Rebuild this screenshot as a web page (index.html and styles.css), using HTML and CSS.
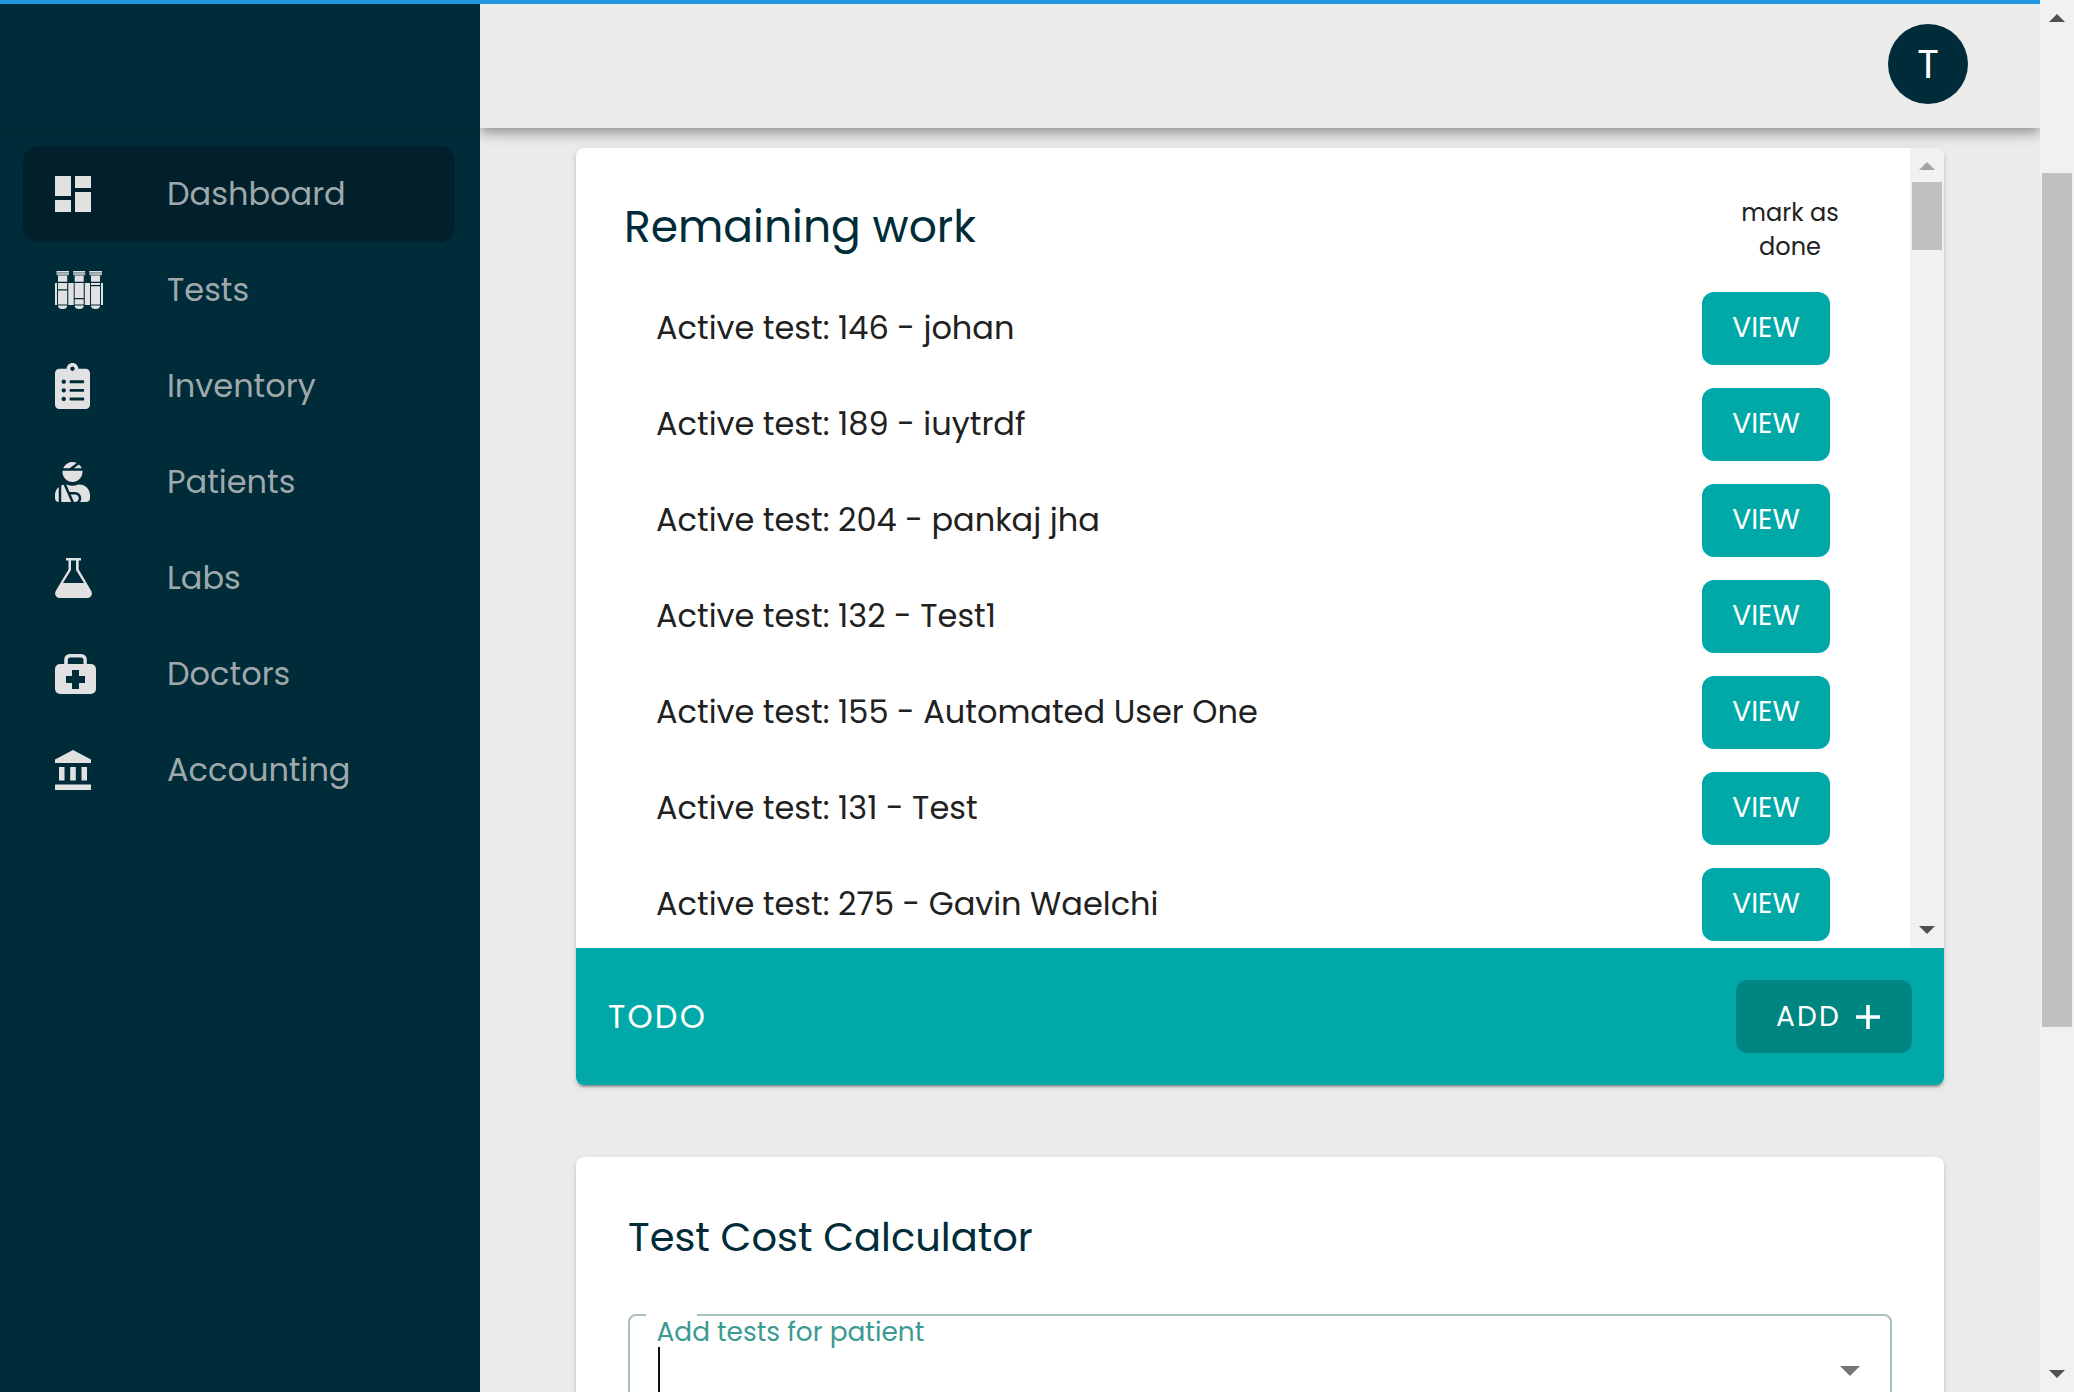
FILE: index.html
```html
<!DOCTYPE html>
<html lang="en">
<head>
<meta charset="utf-8">
<title>Dashboard</title>
<link rel="stylesheet" href="styles.css">
</head>
<body>
<div class="app">
  <nav class="sidebar">
    <div class="brand"></div>
    <ul class="menu">
      <li class="item active"><svg class="icon" width="36" height="36" viewBox="0 0 36 36"><path d="M0 0h16v20H0zM20 0h16v12H20zM0 24h16v12H0zM20 16h16v20H20z"/></svg><span>Dashboard</span></li>
      <li class="item"><svg class="icon" width="48" height="38" viewBox="0 0 48 38"><path d="M0 12h2v22H0zM13.300 12h5.400v22h-5.400zM29.800 12h5.200v22h-5.200zM46 12h2v22h-2z"/><path d="M1.500 0h12.500v1.200H1.500zM18.200 0h12v1.200h-12zM34.300 0H47v1.200H34.300z"/><path class="shade" d="M1.500 1.200h12.500v3H1.500zM18.200 1.200h12v3h-12zM34.300 1.200H47v3H34.300z"/><path d="M3 4.500h9.200v6.200H3zM19.700 4.500h9v6.200h-9zM36 4.500h9v6.200h-9zM3 12h9.200v6.200H3zM3 19.600h9.200v13.900H3zM19.700 12h9v15h-9zM19.700 28.200h9v5.300h-9zM36 12h9v2h-9zM36 15.200h9v18.300h-9z"/><path d="M3 34.500h9.200a4.600 3.500 0 0 1-9.200 0zM19.700 34.500h9a4.500 3.500 0 0 1-9 0zM36 34.500h9a4.500 3.500 0 0 1-9 0z"/></svg><span>Tests</span></li>
      <li class="item"><svg class="icon" width="35" height="46" viewBox="0 0 384 512" preserveAspectRatio="none"><path d="M336 64h-80c0-35.300-28.700-64-64-64s-64 28.700-64 64H48C21.500 64 0 85.500 0 112v352c0 26.500 21.500 48 48 48h288c26.500 0 48-21.500 48-48V112c0-26.500-21.500-48-48-48zM96 424c-13.300 0-24-10.700-24-24s10.700-24 24-24 24 10.700 24 24-10.700 24-24 24zm0-96c-13.300 0-24-10.700-24-24s10.700-24 24-24 24 10.700 24 24-10.700 24-24 24zm0-96c-13.300 0-24-10.700-24-24s10.700-24 24-24 24 10.700 24 24-10.700 24-24 24zm96-192c13.300 0 24 10.700 24 24s-10.700 24-24 24-24-10.700-24-24 10.700-24 24-24zm128 368c0 4.400-3.600 8-8 8H168c-4.400 0-8-3.600-8-8v-16c0-4.400 3.600-8 8-8h144c4.400 0 8 3.600 8 8v16zm0-96c0 4.400-3.600 8-8 8H168c-4.400 0-8-3.600-8-8v-16c0-4.400 3.600-8 8-8h144c4.400 0 8 3.600 8 8v16zm0-96c0 4.400-3.600 8-8 8H168c-4.400 0-8-3.600-8-8v-16c0-4.400 3.600-8 8-8h144c4.400 0 8 3.600 8 8v16z"/></svg><span>Inventory</span></li>
      <li class="item"><svg class="icon" width="35" height="40" viewBox="0 0 448 512"><path d="M277.370 11.980C261.080 4.470 243.110 0 224 0c-53.690 0-99.500 33.130-118.510 80h81.190l90.690-68.020zM342.510 80c-7.900-19.470-20.670-36.200-36.490-49.520L239.990 80h102.520zM224 256c70.690 0 128-57.310 128-128 0-5.480-.95-10.700-1.610-16H97.610c-.67 5.300-1.610 10.520-1.610 16 0 70.690 57.310 128 128 128zM80 299.700V512h128.260l-98.450-221.520A132.835 132.835 0 0 0 80 299.700zM0 464c0 26.510 21.490 48 48 48V320.240C18.880 344.890 0 381.260 0 422.400V464zm256-48h-55.380l42.670 96H256c26.470 0 48-21.530 48-48s-21.530-48-48-48zm57.600-128h-16.710c-22.240 10.180-46.880 16-72.890 16s-50.650-5.820-72.890-16h-7.370l42.670 96H256c44.110 0 80 35.890 80 80 0 18.080-6.260 34.590-16.410 48H400c26.510 0 48-21.490 48-48v-41.600c0-74.230-60.170-134.400-134.400-134.400z"/></svg><span>Patients</span></li>
      <li class="item"><svg class="icon" width="37" height="40" viewBox="0 0 37 40"><path fill-rule="evenodd" d="M11 0h15v2.500h-2.300v9L36 32.500c2.300 4-.2 7.500-4 7.500H5c-3.800 0-6.300-3.500-4-7.500L13.500 11.500v-9H11zM16 2.500V12L8 25h21l-8-13V2.500z"/></svg><span>Labs</span></li>
      <li class="item"><svg class="icon" width="41" height="40" viewBox="0 0 41 40"><path fill-rule="evenodd" d="M9.200 10V5.500A5.500 5.500 0 0 1 14.700 0h11.600a5.500 5.500 0 0 1 5.500 5.500V10H36a5 5 0 0 1 5 5v20a5 5 0 0 1-5 5H5a5 5 0 0 1-5-5V15a5 5 0 0 1 5-5zM12.800 10h15.700V6a2.500 2.500 0 0 0-2.500-2.500H15.300A2.500 2.500 0 0 0 12.800 6zM17 16v6h-6v7h6v6h7v-6h6v-7h-6v-6z"/></svg><span>Doctors</span></li>
      <li class="item"><svg class="icon" width="36" height="40" viewBox="0 0 36 40"><path d="M0 13V9.500L18 0l18 9.500V13zM4 17h5.500v13.500H4zM15.200 17h5.600v13.500h-5.600zM26.500 17H32v13.500h-5.500zM0 34.500h36V40H0z"/></svg><span>Accounting</span></li>
    </ul>
  </nav>
  <div class="page">
    <header class="topbar"><div class="avatar">T</div></header>
    <main class="content">
      <section class="card work">
        <div class="scroller">
          <div class="list">
            <div class="list-head"><h1>Remaining work</h1><p class="mark">mark as<br>done</p></div>
            <div class="row"><span>Active test: 146 - johan</span><button class="view">VIEW</button></div>
            <div class="row"><span>Active test: 189 - iuytrdf</span><button class="view">VIEW</button></div>
            <div class="row"><span>Active test: 204 - pankaj jha</span><button class="view">VIEW</button></div>
            <div class="row"><span>Active test: 132 - Test1</span><button class="view">VIEW</button></div>
            <div class="row"><span>Active test: 155 - Automated User One</span><button class="view">VIEW</button></div>
            <div class="row"><span>Active test: 131 - Test</span><button class="view">VIEW</button></div>
            <div class="row"><span>Active test: 275 - Gavin Waelchi</span><button class="view">VIEW</button></div>
          </div>
          <div class="bar inner"><i class="up-arrow muted"></i><i class="thumb"></i><i class="down-arrow"></i></div>
        </div>
        <footer class="todo"><span>TODO</span><button class="add"><span>ADD</span><svg width="24" height="24" viewBox="0 0 24 24"><path d="M10.200 0h3.600v10.200H24v3.600H13.800V24h-3.600V13.800H0v-3.600h10.200z"/></svg></button></footer>
      </section>
      <section class="card calc">
        <h2>Test Cost Calculator</h2>
        <div class="field"><label>Add tests for patient</label><i class="caret"></i><i class="drop"></i></div>
      </section>
    </main>
  </div>
  <div class="bar outer"><i class="up-arrow"></i><i class="thumb"></i><i class="down-arrow"></i></div>
  <div class="progress"></div>
</div>
</body>
</html>
```
FILE: styles.css
```css
* { box-sizing: border-box; }
body { margin: 0; font-family: Poppins, "Open Sans", sans-serif; font-weight: 400; color: #212121; background: #ebebeb; overflow: hidden; }
h1, h2, p, ul { margin: 0; padding: 0; font-weight: 400; }
button { border: 0; padding: 0; font: inherit; color: #fff; }
.app { position: relative; display: flex; height: 1392px; overflow: hidden; }
.progress { position: absolute; z-index: 3; left: 0; top: 0; width: 2040px; height: 4px; background: #2196e0; }

.sidebar { position: relative; z-index: 2; width: 480px; background: #002b38; }
.brand { height: 129px; border-bottom: 1px solid #02242f; }
.menu { list-style: none; padding: 17px 25px 0 23px; }
.item { display: grid; grid-template-columns: 112px 1fr; align-items: center; height: 96px; padding-left: 32px; border-radius: 16px; font-size: 32px; color: #9fa9ac; }
.item.active { background: #02202b; }
.icon { fill: #e1e1e1; }
.shade { fill: #a9b5b5; }

.page { width: 1560px; }
.topbar { position: relative; z-index: 1; height: 128px; padding: 24px 72px 0 0; display: flex; justify-content: flex-end; background: #ebebeb; box-shadow: 0 4px 8px -2px rgba(0,0,0,.2), 0 8px 10px rgba(0,0,0,.14), 0 2px 20px rgba(0,0,0,.12); }
.avatar { width: 80px; height: 80px; border-radius: 50%; background: #002b38; color: #fff; font-size: 40px; line-height: 80px; text-align: center; }
.content { padding: 20px 96px 0; }
.card { border-radius: 8px; background: #fff; box-shadow: 0 4px 2px -2px rgba(0,0,0,.2), 0 2px 2px rgba(0,0,0,.14), 0 2px 6px rgba(0,0,0,.12); }
.work { height: 937px; overflow: hidden; }
.scroller { display: flex; height: 800px; overflow: hidden; }
.list { width: 1334px; }
.list-head { display: flex; justify-content: space-between; height: 132px; padding: 48px 66px 0 48px; }
h1 { font-size: 44px; line-height: 62px; color: #002b38; }
.mark { width: 108px; font-size: 24px; line-height: 34px; text-align: center; }
.row { display: flex; align-items: center; justify-content: space-between; height: 96px; padding: 0 80px; font-size: 32px; }
.view { width: 128px; height: 73px; border-radius: 12px; background: #00a9a7; font-size: 28px; }
.todo { display: flex; align-items: center; justify-content: space-between; height: 137px; padding: 0 32px; background: #00a9a7; color: #fff; font-size: 32px; letter-spacing: 2.2px; }
.add { display: flex; align-items: center; justify-content: space-between; width: 176px; height: 73px; padding: 0 32px 0 40px; border-radius: 12px; background: #008681; font-size: 28px; letter-spacing: 2.2px; }
.add svg { fill: #fff; }
.calc { height: 400px; margin-top: 72px; padding: 52px; }
h2 { font-size: 40px; line-height: 56px; color: #002b38; }
.field { position: relative; height: 200px; margin-top: 49px; border: 2px solid #a8c2c1; border-radius: 8px; }
.field::before { content: ""; position: absolute; left: 16px; top: -2px; width: 51px; height: 2px; background: #fff; }
label { position: absolute; left: 26.5px; top: -1px; font-size: 26.4px; line-height: 34px; color: #3c9a92; white-space: nowrap; }
.caret { position: absolute; left: 28px; top: 31px; width: 2px; height: 60px; background: #111; }
.drop { position: absolute; right: 30px; top: 50px; width: 20px; height: 10px; background: #757575; clip-path: polygon(0 0, 100% 0, 50% 100%); }

.bar { position: relative; z-index: 2; display: flex; flex-direction: column; align-items: center; width: 34px; background: #f1f1f1; }
.inner { z-index: 0; }
.thumb { width: 30px; background: #c1c1c1; }
.up-arrow, .down-arrow { width: 16px; height: 8px; margin-top: 14px; background: #505050; clip-path: polygon(50% 0, 100% 100%, 0 100%); }
.down-arrow { margin: auto 0 14px; clip-path: polygon(0 0, 100% 0, 50% 100%); }
.muted { background: #a3a3a3; }
.inner .thumb { height: 68px; margin-top: 12px; }
.outer .thumb { height: 854px; margin-top: 151px; }
```
